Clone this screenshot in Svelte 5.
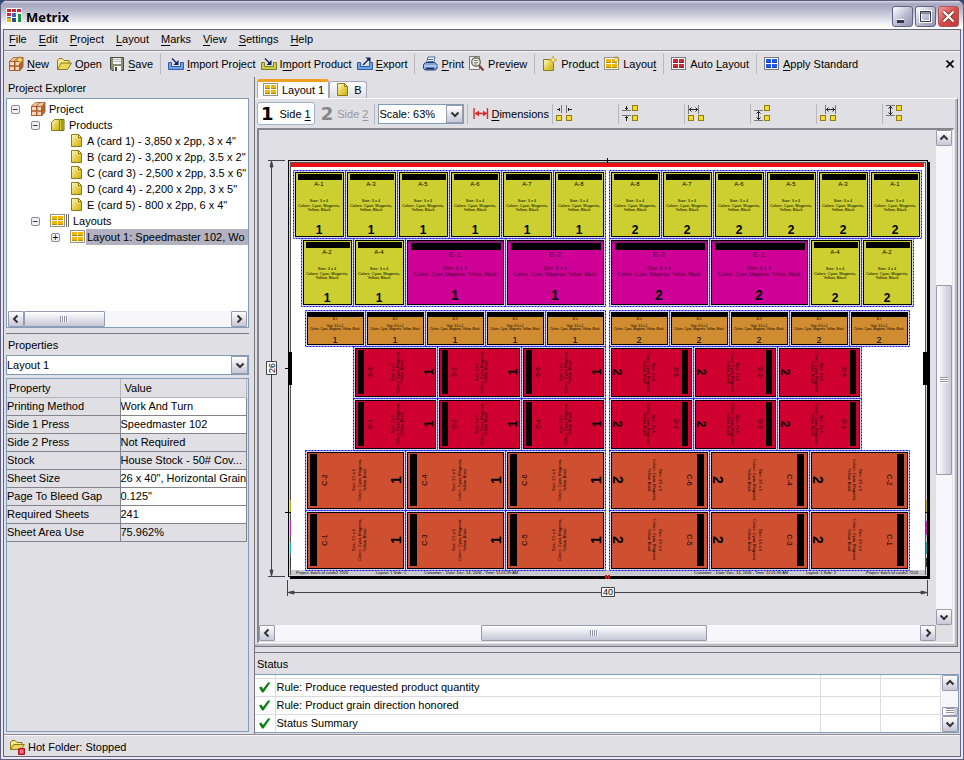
<script>
  const menus = ['&File', '&Edit', '&Project', '&Layout', '&Marks', '&View', '&Settings', '&Help'];

  const tools = [
    [{ icon: 'new', label: '&New' }, { icon: 'open', label: '&Open' }, { icon: 'save', label: '&Save' }],
    [{ icon: 'importBlue', label: '&Import Project' }, { icon: 'importGreen', label: 'I&mport Product' }, { icon: 'export', label: '&Export' }],
    [{ icon: 'print', label: '&Print' }, { icon: 'preview', label: 'Pre&view' }],
    [{ icon: 'product', label: 'Pro&duct' }, { icon: 'layoutNew', label: 'Layou&t' }],
    [{ icon: 'autoLayout', label: 'Auto &Layout' }],
    [{ icon: 'standard', label: '&Apply Standard' }]
  ];

  const products = [
    'A (card 1) - 3,850 x 2pp, 3 x 4"',
    'B (card 2) - 3,200 x 2pp, 3.5 x 2"',
    'C (card 3) - 2,500 x 2pp, 3.5 x 6"',
    'D (card 4) - 2,200 x 2pp, 3 x 5"',
    'E (card 5) - 800 x 2pp, 6 x 4"'
  ];

  const properties = [
    ['Printing Method', 'Work And Turn', true],
    ['Side 1 Press', 'Speedmaster 102', true],
    ['Side 2 Press', 'Not Required', false],
    ['Stock', 'House Stock - 50# Cov...', false],
    ['Sheet Size', '26 x 40", Horizontal Grain', true],
    ['Page To Bleed Gap', '0.125"', true],
    ['Required Sheets', '241', true],
    ['Sheet Area Use', '75.962%', false]
  ];

  const rules = ['Rule: Produce requested product quantity', 'Rule: Product grain direction honored', 'Status Summary'];

  const spacers = ['gapX', 'gapY', 'spanX', 'spanYLow', 'spanXRight', 'spanYHigh'];

  // Each kind of card: cell size on the sheet and the fill of the printed piece.
  const kinds = {
    A: { w: 52, h: 68, fill: '#cdcf30' },
    E: { w: 100, h: 68, fill: '#cf0096' },
    B: { w: 60, h: 36, fill: '#d08c30' },
    D: { w: 84, h: 52, fill: '#cf0030' },
    C: { w: 100, h: 60, fill: '#cf5030' }
  };

  const rows = [
    { y: 170, left: ['A-1', 'A-3', 'A-5', 'A-6', 'A-7', 'A-8'], right: ['A-8', 'A-7', 'A-6', 'A-5', 'A-3', 'A-1'] },
    { y: 238, left: ['A-2', 'A-4', 'E-1', 'E-2'], right: ['E-2', 'E-1', 'A-4', 'A-2'] },
    { y: 310, left: ['B-1', 'B-2', 'B-3', 'B-4', 'B-5'], right: ['B-5', 'B-4', 'B-3', 'B-2', 'B-1'] },
    { y: 346, left: ['D-6', 'D-3', 'D-5'], right: ['D-5', 'D-3', 'D-6'] },
    { y: 398, left: ['D-1', 'D-2', 'D-4'], right: ['D-4', 'D-2', 'D-1'] },
    { y: 450, left: ['C-2', 'C-4', 'C-6'], right: ['C-6', 'C-4', 'C-2'] },
    { y: 510, left: ['C-1', 'C-3', 'C-5'], right: ['C-5', 'C-3', 'C-1'] }
  ];

  const widthOf = (names) => names.reduce((sum, n) => sum + kinds[n[0]].w, 0);

  function place(names, start, y, side) {
    let x = start;
    return names.map((name) => {
      const card = { name, x, y, side, kind: name[0], ...kinds[name[0]] };
      x += card.w;
      return card;
    });
  }

  const cards = rows.flatMap((r) => [
    ...place(r.left, 605 - widthOf(r.left), r.y, 1),
    ...place(r.right, 609, r.y, 2)
  ]);

  let scale = $state('Scale: 63%');
  let subject = $state('Layout 1');
</script>

{#snippet mnemonic(label)}{@const at = label.indexOf('&')}<span class="label">{label.slice(0, at)}<u>{label[at + 1]}</u>{label.slice(at + 2)}</span>{/snippet}

{#snippet panes(x, y, fill, line)}
  <rect x={x + 0.5} y={y + 0.5} width="14" height="12" fill="#fff" stroke={line} />
  <path d="M{x + 2} {y + 2}h5v4h-5zM{x + 8} {y + 2}h5v4h-5zM{x + 2} {y + 7}h5v4h-5zM{x + 8} {y + 7}h5v4h-5z" {fill} />
  <path d="M{x + 2} {y + 5.5}h5M{x + 8} {y + 5.5}h5M{x + 2} {y + 10.5}h5M{x + 8} {y + 10.5}h5" stroke="#000" opacity=".25" />
{/snippet}

{#snippet sparkle(x, y)}
  <path d="M{x} {y - 4}l1 3 3 1-3 1-1 3-1-3-3-1 3-1z" fill="#fff07a" stroke="#b89020" stroke-width=".6" />
{/snippet}

{#snippet page()}
  <path d="M2.5 1.5h7l3 3v9h-10z" fill="url(#pageGold)" stroke="#8a7c1c" />
  <path d="M9.5 1.5v3h3z" fill="#fff" stroke="#8a7c1c" />
{/snippet}

{#snippet crate()}
  <path d="M1 5l5-3.500h9l-3 3.500z" fill="#f6c29c" />
  <path d="M12 5l3-3.500v9.500l-3 4z" fill="#b9673a" />
  <path d="M1 5h11v10h-11z" fill="#e09060" />
  <path d="M2 6h4v3h-4zM8 6h3v3h-3zM2 11h4v3h-4zM8 11h3v3h-3z" fill="#fbd6b8" />
  <path d="M1.500 5.500h10v9h-10zM1.500 5l4-3.500h9.500v9.500l-3.500 4M11.500 5.500l3.500-4M6.500 5v10M1 10h11M12 10l3-4M6 5l4-3.500" fill="none" stroke="#99562c" stroke-width=".8" />
{/snippet}

{#snippet icon(name)}
  <svg class="icon" width="16" height="16" viewBox="0 0 16 16" aria-hidden="true">
    {#if name === 'new'}
      {@render crate()}{@render sparkle(12, 4)}
    {:else if name === 'crate'}
      {@render crate()}
    {:else if name === 'open'}
      <path d="M1.500 13.500v-9l1.500-2h3l2 2h5v3" fill="#f6e88c" stroke="#8a7c1c" />
      <path d="M1.500 13.500l3.500-6.500h10.500l-4 6.500z" fill="#ecd95a" stroke="#8a7c1c" />
    {:else if name === 'save'}
      <path d="M1.500 1.500h13v13h-11.500l-1.500-1.500z" fill="#8b8d70" stroke="#46483c" />
      <path d="M4 2h8v6h-8zM5 10h7v5h-7z" fill="#f4f4f4" />
      <path d="M4 3.500h8M4 5.500h8" stroke="#b9bcc8" />
      <path d="M6 11h2v4h-2z" fill="#46483c" />
    {:else if name === 'importBlue' || name === 'importGreen' || name === 'export'}
      {@const green = name === 'importGreen'}
      <path d="M.5 6.500h3v4h9v-4h3v7h-15z" fill={green ? '#c6cf4a' : '#6fa3e6'} stroke={green ? '#7c8420' : '#2c5ea8'} />
      {#if name === 'export'}
        <path d="M6 9l6-6" stroke="#14205c" stroke-width="1.200" fill="none" />
        <path d="M8.500 1.500h5v5z" fill="#14205c" />
      {:else}
        <path d="M4 2.500l5 5" stroke="#14205c" stroke-width="1.200" fill="none" />
        <path d="M10.500 4v5h-5z" fill="#14205c" />
      {/if}
    {:else if name === 'print'}
      <path d="M4.500 7l1.500-6h7l-1.500 6z" fill="#fff" stroke="#4b6593" />
      <path d="M6 3.500h5M6 5.500h5" stroke="#4b6593" />
      <path d="M1.500 8.500l2-2h9.500l2 2v4l-1.500 1.500h-10.500l-1.500-1.500z" fill="#7fa3d8" stroke="#284476" />
      <path d="M2 10h13" stroke="#dfeaff" />
      <path d="M4 12.500h8" stroke="#16284c" stroke-width="1.500" />
    {:else if name === 'preview'}
      <path d="M.5 .5h10v13h-10z" fill="#f5f5ee" stroke="#7b7b73" />
      <circle cx="7" cy="6" r="4.300" fill="#eef1dc" stroke="#6f7266" stroke-width="1.400" />
      <path d="M5 4.500h4M5 6.500h4M5 8h3" stroke="#888" />
      <path d="M10 9.500l4.500 5" stroke="#7c4038" stroke-width="2.200" />
    {:else if name === 'product'}
      <path d="M1.500 3.500h7l3 3v8h-10z" fill="url(#pageGold)" stroke="#8a7c1c" />
      {@render sparkle(11, 4)}
    {:else if name === 'layoutNew'}
      {@render panes(0, 1, '#f2b705', '#98937a')}{@render sparkle(12, 4)}
    {:else if name === 'autoLayout'}
      {@render panes(0, 1, '#cf2a31', '#77777f')}
    {:else if name === 'standard'}
      {@render panes(0, 1, '#2257f0', '#77777f')}
    {:else if name === 'layout'}
      {@render panes(0, 1, '#f2b705', '#98937a')}
    {:else if name === 'page'}
      {@render page()}
    {:else if name === 'pages'}
      <path d="M1.500 5.500l3-3h5v11h-8z" fill="url(#pageGold)" stroke="#8a7c1c" />
      <path d="M10 2.500h2v11h-2M12 2.500h2v11h-2" fill="#d0cf3a" stroke="#6d6612" />
    {:else if name === 'dimension'}
      <path d="M1 2v11M14.500 2v11M2 7.500h12" stroke="#e02828" stroke-width="1.400" fill="none" />
      <path d="M2 7.500l4-3v6zM14 7.500l-4-3v6z" fill="#e02828" />
    {:else if name === 'folderStop'}
      <path d="M1.500 10.500v-7l1.500-2h3l2 2h5v2.500" fill="#f6e88c" stroke="#8a7c1c" />
      <path d="M1.500 10.500l3-5h11l-3.500 5z" fill="#e6d75c" stroke="#8a7c1c" />
      <path d="M9.500 9.500h6v6h-6z" fill="#f03048" stroke="#b01828" />
      <path d="M11.500 11.500h2v2h-2z" fill="none" stroke="#ff9aa4" />
    {:else if name === 'check'}
      <path d="M2 8.500l2.500-1 1.500 2.500 5-6.500h2.500l-7 10h-1.500z" fill="#0a8210" />
    {/if}
  </svg>
{/snippet}

{#snippet dot(x, y)}
  <rect x={x + 0.5} y={y + 0.5} width="5" height="5" fill="#f5dc2c" stroke="#8f7d10" />
{/snippet}

{#snippet spacerIcon(name)}
  <svg class="icon" width="17" height="17" viewBox="0 0 17 17" aria-hidden="true" stroke="#222" fill="none">
    {#if name === 'gapX'}
      <path d="M5.500 0v8M10.500 0v8" stroke="#777" /><path d="M1 4.500h3M12 4.500h4M3.500 3v3M12.500 3v3" />
      {@render dot(0, 10)}{@render dot(10, 10)}
    {:else if name === 'gapY'}
      <path d="M0 5.500h9M0 10.500h9" stroke="#777" /><path d="M4.500 1v4M4.500 11v5M3 3.500h3M3 12.500h3" />
      {@render dot(10, 0)}{@render dot(10, 10)}
    {:else if name === 'spanX' || name === 'spanXRight'}
      {@const o = name === 'spanX' ? 0 : 5}
      <path d="M{o + 0.5} 0v9M{o + 10.5} 0v9" stroke="#777" />
      <path d="M{o + 1} 4.500h9M{o + 3.5} 2.500l-2 2 2 2M{o + 7.5} 2.500l2 2-2 2" />
      {@render dot(0, 10)}{@render dot(10, 10)}
    {:else}
      {@const o = name === 'spanYHigh' ? 0 : 5}
      <path d="M0 {o + 0.5}h9M0 {o + 10.5}h9" stroke="#777" />
      <path d="M4.500 {o + 1}v9M2.500 {o + 3.5}l2-2 2 2M2.500 {o + 7.5}l2 2 2-2" />
      {@render dot(10, 0)}{@render dot(10, 10)}
    {/if}
  </svg>
{/snippet}

{#snippet arrow(dir)}
  {@const turn = { up: 0, right: 90, down: 180, left: 270 }[dir]}
  <svg width="10" height="10" viewBox="0 0 10 10" aria-hidden="true">
    <path d="M1.500 6.500l3.500-3.500 3.500 3.500" transform="rotate({turn} 5 5)" fill="none" stroke="#333" stroke-width="2" />
  </svg>
{/snippet}

{#snippet scrollbar(axis, start, size)}
  <div class="bar {axis}">
    <button class="step" aria-label={axis === 'x' ? 'Scroll left' : 'Scroll up'}>{@render arrow(axis === 'x' ? 'left' : 'up')}</button>
    <div class="track">
      <div class="before" style:flex-basis="{start}%"></div>
      <div class="thumb" style:flex-basis="{size}%"><i></i></div>
    </div>
    <button class="step" aria-label={axis === 'x' ? 'Scroll right' : 'Scroll down'}>{@render arrow(axis === 'x' ? 'right' : 'down')}</button>
  </div>
{/snippet}

{#snippet cardFace(c)}
  <rect class="cell" x={c.x + 0.5} y={c.y + 0.5} width={c.w} height={c.h} />
  <rect x={c.x + 2.5} y={c.y + 2.5} width={c.w - 4} height={c.h - 4} fill={c.fill} stroke="#000" />
  {#if c.kind === 'A'}
    {@const m = c.x + c.w / 2}
    <rect x={c.x + 5} y={c.y + 4} width="44" height="6" />
    <text class="t6" x={m} y={c.y + 16}>{c.name}</text>
    <text class="t4" x={m} y={c.y + 32}>Size: 3 x 4</text>
    <text class="t4" x={m} y={c.y + 37}>Colors: Cyan, Magenta,</text>
    <text class="t4" x={m} y={c.y + 41}>Yellow, Black</text>
    <text class="t12" x={m} y={c.y + 64}>{c.side}</text>
  {:else if c.kind === 'E'}
    {@const m = c.x + c.w / 2}
    <rect x={c.x + 3} y={c.y + 3} width={c.w - 5} height="2" fill="#8c1670" />
    <rect x={c.x + 6} y={c.y + 5} width="90" height="7" />
    <text class="t8 faint" x={m} y={c.y + 19}>{c.name}</text>
    <text class="t5 faint" x={m} y={c.y + 32}>Size: 6 x 4</text>
    <text class="t5 faint" x={m} y={c.y + 38}>Colors: Cyan, Magenta, Yellow, Black</text>
    <text class="t14" x={m} y={c.y + 62}>{c.side}</text>
  {:else if c.kind === 'B'}
    {@const m = c.x + c.w / 2}
    <rect x={c.x + 3} y={c.y + 3} width="56" height="4" />
    <text class="t3" x={m} y={c.y + 10}>{c.name}</text>
    <text class="t3" x={m} y={c.y + 17}>Size: 3.5 x 2</text>
    <text class="t3" x={m} y={c.y + 20}>Colors: Cyan, Magenta, Yellow, Black</text>
    <text class="t9" x={m} y={c.y + 33}>{c.side}</text>
  {:else}
    {@const turn = c.side === 1 ? -90 : 90}
    {@const big = c.kind === 'C'}
    <!-- Local axes of a turned card: x runs along its short edge, y from the black bar to the side number. -->
    <g transform="translate({c.side === 1 ? c.x : c.x + c.w} {c.y + c.h / 2}) rotate({turn})">
      {#if big}
        <rect x="-26" y="5" width="52" height="7" />
        <text class="t7" y="22">{c.name}</text>
        <text class="t4" y="50">Size: 3.5 x 6</text>
        <text class="t4" y="56">Colors: Cyan, Magenta,</text>
        <text class="t4" y="61">Yellow, Black</text>
        <text class="t14" y="96">{c.side}</text>
      {:else}
        <rect x="-22" y="5" width="44" height="6" />
        <text class="t6" y="19">{c.name}</text>
        <text class="t4" y="41">Size: 3 x 5</text>
        <text class="t4" y="46">Colors: Cyan, Magenta,</text>
        <text class="t4" y="50">Yellow, Black</text>
        <text class="t12" y="80">{c.side}</text>
      {/if}
    </g>
  {/if}
{/snippet}

<svg class="defs" width="0" height="0" aria-hidden="true">
  <linearGradient id="pageGold" x1="0" y1="0" x2="1" y2="1">
    <stop offset="0" stop-color="#fffbd0" /><stop offset=".6" stop-color="#e4c83c" /><stop offset="1" stop-color="#b9bd1c" />
  </linearGradient>
</svg>

<div class="window">
  <header class="title">
    <svg width="16" height="16" viewBox="0 0 16 16" aria-hidden="true">
      <rect width="16" height="16" fill="#fff" />
      <path d="M1 1h4v3h-4zM6 1h4v3h-4zM11 1h4v3h-4zM1 5h4v3h-4z" fill="#c8283c" />
      <path d="M6 5h4v4h-4zM1 9h4v1h-4z" fill="#3a66c0" />
      <path d="M1 10h4v4h-4zM6 10h4v4h-4z" fill="#e8b820" /><path d="M6 10h4v4h-4z" fill="#274ca8" /><path d="M12 6h3v8h-3z" fill="#159045" />
    </svg>
    <h1>Metrix</h1>
    <div class="controls">
      <button aria-label="Minimize"><svg width="19" height="19" viewBox="0 0 19 19"><path d="M4 13h7v3h-7z" fill="#34344c" /><path d="M4 12.500h7" stroke="#fff" /></svg></button>
      <button aria-label="Maximize"><svg width="19" height="19" viewBox="0 0 19 19"><path d="M4.500 4.500h10v10h-10z" fill="none" stroke="#fff" stroke-width="3" /><path d="M4.500 4.500h10v10h-10zM4 6h11" fill="none" stroke="#34344c" /></svg></button>
      <button class="close" aria-label="Close"><svg width="19" height="19" viewBox="0 0 19 19"><path d="M4.500 4.500l10 10M14.500 4.500l-10 10" stroke="#732" stroke-width="4" /><path d="M4.500 4.500l10 10M14.500 4.500l-10 10" stroke="#fff" stroke-width="2.400" /></svg></button>
    </div>
  </header>

  <div class="client">
    <nav class="menubar">
      {#each menus as m}<button>{@render mnemonic(m)}</button>{/each}
    </nav>

    <div class="toolbar">
      {#each tools as group}
        <div class="group">
          {#each group as t}<button>{@render icon(t.icon)}{@render mnemonic(t.label)}</button>{/each}
        </div>
      {/each}
      <button class="dismiss" aria-label="Close toolbar"><svg width="8" height="8" viewBox="0 0 8 8"><path d="M.5 .5l7 7M7.500 .5l-7 7" stroke="#000" stroke-width="1.600" /></svg></button>
    </div>

    <main>
      <aside>
        <h2>Project Explorer</h2>
        <div class="tree">
          <ul>
            <li>
              <div class="node"><button class="toggle" aria-label="Collapse">−</button>{@render icon('crate')}<span>Project</span></div>
              <ul>
                <li>
                  <div class="node"><button class="toggle" aria-label="Collapse">−</button>{@render icon('pages')}<span>Products</span></div>
                  <ul>
                    {#each products as p}
                      <li><div class="node leaf">{@render icon('page')}<span>{p}</span></div></li>
                    {/each}
                  </ul>
                </li>
                <li>
                  <div class="node">
                    <button class="toggle" aria-label="Collapse">−</button>
                    <svg class="icon" width="20" height="16" viewBox="0 0 20 16" aria-hidden="true">
                      {@render panes(0, 1, '#f2b705', '#98937a')}
                      <path d="M16.500 1v13M18.500 1v13" stroke="#666" />
                    </svg>
                    <span>Layouts</span>
                  </div>
                  <ul>
                    <li><div class="node last"><button class="toggle" aria-label="Expand">+</button>{@render icon('layout')}<span class="picked">Layout 1: Speedmaster 102, Wo</span></div></li>
                  </ul>
                </li>
              </ul>
            </li>
          </ul>
          {@render scrollbar('x', 0, 39)}
        </div>
        <div class="split"></div>
        <h2><label for="subject">Properties</label></h2>
        <div class="combo wide">
          <select id="subject" bind:value={subject}><option>Layout 1</option></select>
          <span class="drop">{@render arrow('down')}</span>
        </div>
        <div class="sheetinfo">
          <table>
            <thead><tr><th>Property</th><th>Value</th></tr></thead>
            <tbody>
              {#each properties as [name, value, editable]}
                <tr><td>{name}</td><td class:editable>{value}</td></tr>
              {/each}
            </tbody>
          </table>
        </div>
      </aside>

      <section class="work">
        <div class="tabs" role="tablist">
          <button class="tab on" role="tab" aria-selected="true">{@render icon('layout')}Layout 1</button>
          <button class="tab" role="tab" aria-selected="false">{@render icon('page')}B</button>
        </div>

        <div class="editor">
          <div class="sidebar">
            <button class="side on"><b>1</b>{@render mnemonic('Side &1')}</button>
            <button class="side off"><b>2</b>{@render mnemonic('Side &2')}</button>
            <div class="cut combo">
              <select aria-label="Scale" bind:value={scale}><option>Scale: 63%</option></select>
              <span class="drop">{@render arrow('down')}</span>
            </div>
            <button class="cut dims">{@render icon('dimension')}{@render mnemonic('&Dimensions')}</button>
            {#each spacers as s}<button class="cut spacer" aria-label={s}>{@render spacerIcon(s)}</button>{/each}
          </div>

          <div class="view">
            <div class="canvas">
              <svg class="sheet" width="676" height="494" viewBox="259 130 676 494" role="img" aria-label="Press sheet, 40 by 26 inches">
                <rect x="290" y="162" width="640" height="417" />
                <rect x="288.5" y="160.5" width="639" height="416" fill="#d4d4d8" stroke="#000" />
                <rect x="290.5" y="162.5" width="635" height="412" fill="#fff" stroke="#555" />
                <rect x="291" y="163" width="633" height="4" fill="#ee1010" />
                <rect x="291" y="570" width="634" height="5" fill="#c9c9cd" />

                {#each cards as c}{@render cardFace(c)}{/each}

                <g class="slug">
                  <text x="296" y="574">Project: batch of cards2 7203</text>
                  <text x="376" y="574">Layout: 1  Side: 1</text>
                  <text x="424" y="574">Customer: - Date: Dec. 14, 2006 - Time: 11:01:39 AM</text>
                  <text x="694" y="574">Customer: - Date: Dec. 14, 2006 - Time: 11:01:39 AM</text>
                  <text x="806" y="574">Layout: 1  Side: 2</text>
                  <text x="866" y="574">Project: batch of cards2 7203</text>
                </g>

                <path d="M607.500 158v5M285 368.500h4M285 512.500h6M925 512.500h4" stroke="#000" />
                <rect x="288" y="352" width="4" height="33" /><rect x="923" y="352" width="6" height="33" />
                <path d="M290.500 500v12M926.500 500v12" stroke="#b8b020" /><path d="M290.500 521v14M926.500 521v14" stroke="#c02ab0" />
                <path d="M290.500 542v12M926.500 542v12" stroke="#22a8b0" /><path d="M290.500 558v9M926.500 558v9" stroke="#333" />
                <path d="M605 575h2v4h-2zM608 575h2v4h-2z" fill="#d01010" />

                <g stroke="#44444c" fill="#44444c">
                  <path d="M271.500 161v415M268 160.500h17M268 576.500h17M288 592.500h639M287.500 580v16M927.500 580v16" />
                  <path d="M271.500 161l1.500 6h-3zM271.500 576l1.500-6h-3zM288 592.500l6-1.500v3zM927 592.500l-6-1.500v3z" />
                  <path d="M266.500 361.500h10v13h-10zM601.500 587.500h13v9h-13z" fill="#fff" />
                </g>
                <text class="t9" x="608" y="595">40</text>
                <text class="t9" transform="translate(275 368) rotate(-90)">26</text>
              </svg>
            </div>
            {@render scrollbar('y', 30, 41)}
            {@render scrollbar('x', 32, 35)}
          </div>
        </div>

        <div class="gutter"></div>
        <h2>Status</h2>
        <div class="status">
          <table>
            <tbody>
              <tr class="stub"><td></td><td></td><td></td><td></td></tr>
              {#each rules as r}
                <tr><td class="mark">{@render icon('check')}</td><td class="rule">{r}</td><td></td><td></td></tr>
              {/each}
            </tbody>
          </table>
          {@render scrollbar('y', 63, 37)}
        </div>
      </section>
    </main>

    <footer>{@render icon('folderStop')}<span>Hot Folder: Stopped</span></footer>
  </div>
</div>

<style>
  :global(body) { background: #2c4a78; }
  .defs { position: absolute; }
  .window {
    display: flex; flex-direction: column; box-sizing: border-box; height: 100vh; min-height: 700px;
    padding: 0 2px 2px; border: 1px solid #5f5c7c; border-radius: 7px 7px 0 0; background: #e9e9f3;
    font: 11px/16px "Liberation Sans", Arial, sans-serif; color: #000; overflow: hidden;
  }
  button, select { font: inherit; color: inherit; margin: 0; padding: 0; border: 0; background: none; }
  button { display: flex; align-items: center; }
  h1, h2, ul { margin: 0; padding: 0; }
  ul { list-style: none; }
  u { text-underline-offset: 2px; }
  .icon { flex: none; display: block; }
  .label { white-space: pre; }

  .title {
    display: flex; align-items: center; flex: none; height: 28px; margin: 0 -2px; padding: 0 4px 0 5px;
    box-sizing: border-box; background: linear-gradient(#d8d8e6, #a6a6bf 3px, #b4b4ca 8px, #fff 26px);
  }
  .title > svg { margin-top: 2px; }
  h1 { flex: 1; padding: 3px 0 0 4px; font: bold 13px/20px "Open Sans", sans-serif; }
  .controls { display: flex; gap: 2px; padding-top: 3px; }
  .controls button {
    justify-content: center; width: 21px; height: 21px; box-sizing: border-box; border: 1px solid #626284; border-radius: 3px;
    background: linear-gradient(135deg, #fff, #b4b4cc 60%, #9292b0);
  }
  .controls .close { border-color: #a85858; background: linear-gradient(135deg, #f0a0a0, #d84a4a 50%, #c03838); }

  .client { display: flex; flex-direction: column; flex: 1; min-height: 0; border: 1px solid #67647f; background: #e0dfe3; }
  .menubar { display: flex; flex: none; gap: 12px; height: 18px; padding: 0 5px 2px; border-bottom: 1px solid #8f8e96; }
  .toolbar { display: flex; flex: none; align-items: center; height: 26px; padding: 0 6px 2px 4px; border-top: 1px solid #f4f4f6; box-sizing: border-box; }
  .group { display: flex; align-items: center; gap: 5px; height: 20px; padding-right: 7px; }
  .group:first-child { gap: 7px; }
  .group + .group { padding-left: 7px; border-left: 1px solid #b9b8be; }
  .group button { gap: 3px; }
  .dismiss { margin-left: auto; }

  main { display: grid; grid-template-columns: 250px minmax(0, 1fr); flex: 1; min-height: 0; }
  h2 { flex: none; font: inherit; line-height: 23px; height: 21px; }
  aside { display: flex; flex-direction: column; min-width: 0; min-height: 0; padding: 0 5px 2px 2px; }
  aside h2 { padding-left: 2px; }
  .tree { display: flex; flex: none; flex-direction: column; justify-content: space-between; height: 230px; box-sizing: border-box; padding: 2px 0 0; border: 1px solid #7f9db9; background: #fff; overflow: hidden; }
  .tree :global(.bar) { margin: 0 1px; }
  .node { display: flex; align-items: center; height: 16px; padding-left: 4px; white-space: nowrap; }
  .tree .icon { margin: 0 3px 0 10px; }
  .node span { flex: none; }
  .tree ul ul { padding-left: 20px; }
  .tree .leaf { padding-left: 16px; }
  .tree .leaf .icon { margin: 0 2px 0 6px; }
  .tree .last .icon { margin-right: 0; }
  .last .picked { flex: 1 0 auto; padding-left: 1px; background: #b1b1bf; }
  .toggle { flex: none; justify-content: center; width: 9px; height: 9px; border: 1px solid #8c8c9c; border-radius: 2px; box-sizing: border-box; background: #f0f0f6; font: 10px/7px "Liberation Sans", sans-serif; }
  .split { flex: none; height: 5px; border-bottom: 1px solid #77767e; }

  .combo { position: relative; box-sizing: border-box; height: 20px; }
  .combo select { width: 100%; height: 20px; padding: 0 20px 0 0; border: 1px solid #7f9db9; border-radius: 0; background: #fff; appearance: none; }
  .drop { position: absolute; top: 1px; right: 1px; display: flex; align-items: center; justify-content: center; box-sizing: border-box; width: 17px; height: 18px; border: 1px solid #9a9aae; background: linear-gradient(#fff, #c6c6d6); pointer-events: none; }
  .wide { flex: none; margin-bottom: 3px; }

  .sheetinfo { flex: 1; min-height: 0; padding-right: 1px; border: 1px solid #7f9db9; overflow: hidden; }
  .sheetinfo table { width: 100%; border-collapse: collapse; table-layout: fixed; }
  .sheetinfo th, .sheetinfo td { box-sizing: border-box; height: 18px; padding: 0; line-height: 17px; font-weight: normal; text-align: left; white-space: nowrap; overflow: hidden; }
  .sheetinfo th:first-child { width: 113px; }
  .sheetinfo th { padding: 2px 0 0 2px; line-height: 15px; border-right: 1px solid #b4b4be; border-bottom: 1px solid #b4b4be; }
  .sheetinfo th + th { padding-left: 4px; }
  .sheetinfo td { border-bottom: 1px solid #85848c; border-right: 1px solid #85848c; }
  .editable { background: #fff; }

  .work { display: flex; flex-direction: column; min-width: 0; min-height: 0; border-left: 1px solid #77767e; }
  .tabs { display: flex; flex: none; align-items: flex-end; height: 21px; padding-left: 2px; }
  .tab { box-sizing: border-box; height: 17px; padding: 0 4px 0 5px; gap: 3px; border: 1px solid #a4a8b8; border-bottom: 0; border-radius: 3px 3px 0 0; background: linear-gradient(#fff, #dcdce6); }
  .tab.on { height: 19px; border-top: 3px solid #f0a020; background: #fcfcfe; }

  .editor { display: flex; flex: 1; flex-direction: column; min-height: 0; padding: 0 3px 3px 2px; border: solid; border-width: 1px 1px 1px 0; border-color: #fff #77767e #77767e; margin-right: 2px; box-shadow: inset -2px -2px #bdbcc4; }
  .sidebar { display: flex; flex: none; align-items: center; gap: 3px; height: 29px; }
  .side { box-sizing: border-box; height: 23px; padding: 0 3px; gap: 6px; border: 1px solid transparent; border-radius: 3px; }
  .side b { font: bold 18px/22px "DejaVu Sans", sans-serif; }
  .side.on { border-color: #9fb0c8; background: #fff; }
  .side.off { padding: 0 2px; gap: 4px; color: #98979c; }
  .side.on b { color: #000; }
  .side.off b { color: #86858a; }
  .cut::before { content: ""; flex: none; align-self: center; width: 1px; height: 20px; margin-right: 3px; background: #b9b8be; }
  .sidebar .combo { display: flex; width: 90px; }
  .dims { gap: 2px; }
  .sidebar .spacer { width: 63px; }

  .view { display: grid; grid-template: minmax(0, 1fr) 17px / minmax(0, 1fr) 17px; flex: 1; min-height: 0; border: solid; border-width: 2px 1px 1px 2px; border-color: #85848c #fff #fff #85848c; }
  .canvas { display: flex; min-width: 0; min-height: 0; overflow: hidden; }
  .sheet { flex: none; }

  .bar { display: flex; flex: none; background: #f6f6fb; }
  .bar.x { height: 16px; }
  .bar.y { flex-direction: column; width: 16px; }
  .step { flex: none; justify-content: center; box-sizing: border-box; width: 16px; height: 16px; border: 1px solid #9a9aae; border-radius: 1px; background: linear-gradient(#fff, #c6c6d6); }
  .track { display: flex; flex: 1; min-width: 0; min-height: 0; }
  .y .track { flex-direction: column; }
  .before, .thumb { flex: 0 0 auto; min-width: 0; min-height: 0; }
  .thumb { display: flex; align-items: center; justify-content: center; box-sizing: border-box; border: 1px solid #9a9aae; border-radius: 1px; background: linear-gradient(#fff, #c6c6d6); overflow: hidden; }
  .y .thumb { background: linear-gradient(90deg, #fff, #c6c6d6); }
  .thumb i { flex: none; width: 8px; height: 6px; background: repeating-linear-gradient(90deg, #9090a4 0 1px, #fff 1px 2px); }
  .y .thumb i { background: repeating-linear-gradient(#9090a4 0 1px, #fff 1px 2px); }

  .cell { fill: #d6d6f4; stroke: #1010d8; stroke-dasharray: 2 1; }
  .sheet text { text-anchor: middle; }
  .t3 { font-size: 3px; }
  .t4 { font-size: 4px; }
  .t5 { font-size: 5px; }
  .t6 { font-size: 6px; }
  .t7 { font-size: 7px; }
  .t8 { font-size: 8px; }
  .t9 { font-size: 9px; }
  .t12 { font-size: 12px; font-weight: bold; }
  .t14 { font-size: 14px; font-weight: bold; }
  .faint { fill: #50063c; }
  .sheet .slug text { font-size: 4px; text-anchor: start; }

  .gutter { flex: none; height: 5px; border-bottom: 1px solid #77767e; }
  .work h2 { padding-left: 2px; }
  .status { display: flex; flex: none; box-sizing: border-box; height: 59px; margin: 0 1px 1px 0; border: 1px solid #7f9db9; border-left: 0; background: #fff; overflow: hidden; }
  .status table { flex: 1; align-self: flex-start; border-collapse: collapse; table-layout: fixed; }
  .status td { box-sizing: border-box; width: 60px; height: 18px; padding: 0 1px; line-height: 17px; border: solid #d9dbdf; border-width: 0 1px 1px 0; }
  .status .stub td { height: 3px; }
  .status td:first-child { width: 20px; padding-left: 2px; }
  .status td:nth-child(2) { width: auto; }
  .status .bar { margin-left: 1px; }

  footer { display: flex; flex: none; align-items: center; gap: 3px; box-sizing: border-box; height: 22px; padding: 2px 5px 0; border-top: 1px solid #8f8e96; box-shadow: inset 0 1px #f4f4f6; }
</style>
